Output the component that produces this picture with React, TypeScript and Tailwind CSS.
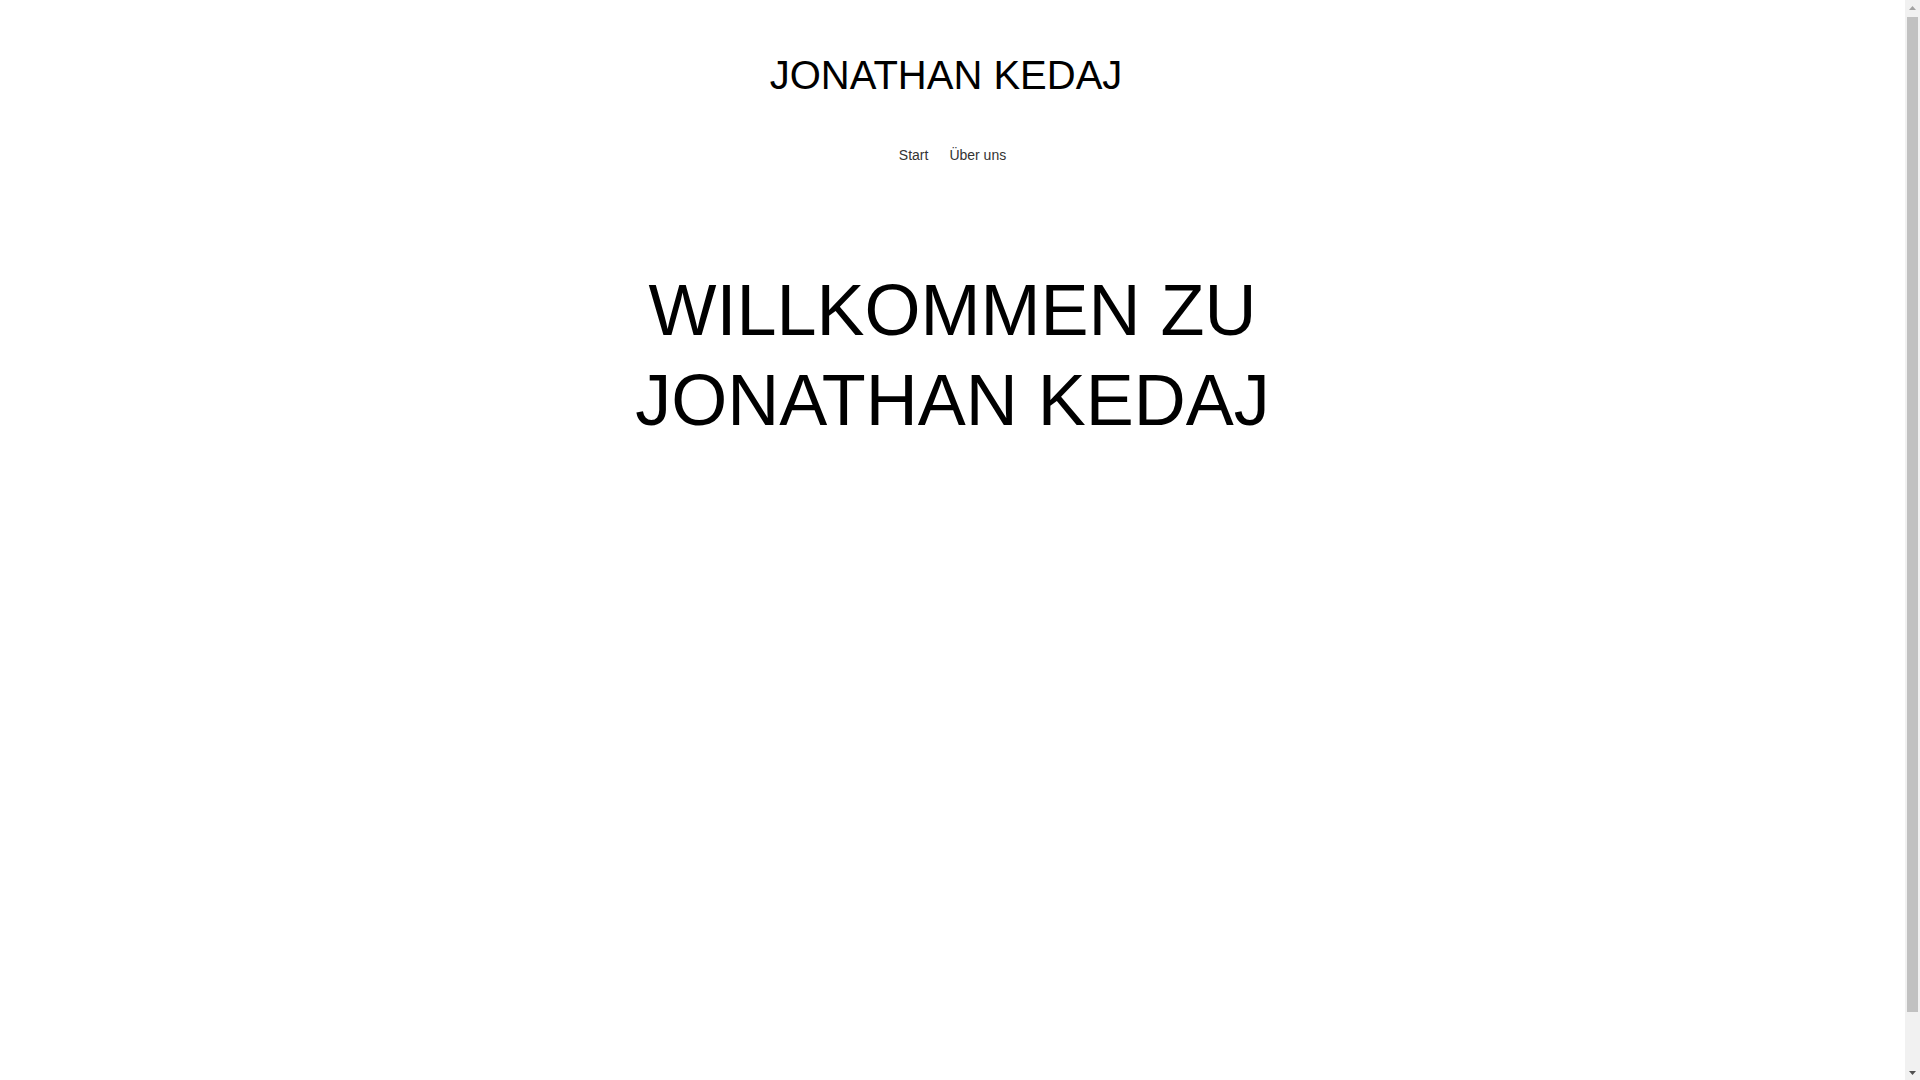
import React from 'react';

const navItems = ['Start', 'Über uns'];

function Scrollbar() {
    return (
        <aside className="flex h-full w-[15px] shrink-0 flex-col bg-[#f1f1f1]">
            <div className="flex h-[15px] items-center justify-center">
                <svg width="7" height="4" viewBox="0 0 7 4"><polygon points="3.5,0 7,4 0,4" fill="#a3a3a3" /></svg>
            </div>
            <div className="flex flex-1 flex-col px-[2px] pt-[2px]">
                <div className="h-[995px] bg-[#c1c1c1]" />
            </div>
            <div className="flex h-[15px] items-center justify-center">
                <svg width="7" height="4" viewBox="0 0 7 4"><polygon points="0,0 7,0 3.5,4" fill="#505050" /></svg>
            </div>
        </aside>
    );
}

export default function App() {
    return (
        <div className="flex h-screen overflow-hidden bg-white text-black font-['Liberation_Sans',Arial,sans-serif]">
            <div className="flex-1">
                <header className="flex flex-col items-center pt-[51px]">
                    <div className="pr-[13px] text-[40px] leading-[48px] text-black">JONATHAN KEDAJ</div>
                    <nav className="mt-[46px] flex items-center gap-[21px] text-[14px] leading-[20px] text-[#333333]">
                        {navItems.map((item) => (
                            <a key={item} className="cursor-pointer">{item}</a>
                        ))}
                    </nav>
                </header>

                <main className="mt-[100px] flex flex-col items-center">
                    <h1 className="text-center text-[72px] leading-[90px] text-black font-normal">
                        WILLKOMMEN ZU
                        <br />
                        JONATHAN KEDAJ
                    </h1>
                </main>
            </div>
            <Scrollbar />
        </div>
    );
}
